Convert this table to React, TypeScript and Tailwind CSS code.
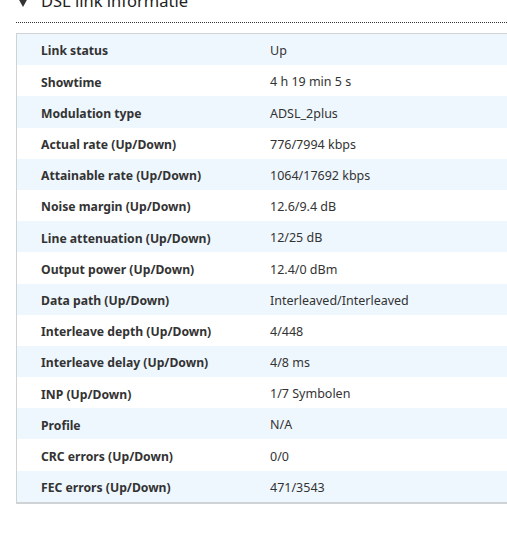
import React from "react";

const rows: [string, string][] = [
  ["Link status", "Up"],
  ["Showtime", "4 h 19 min 5 s"],
  ["Modulation type", "ADSL_2plus"],
  ["Actual rate (Up/Down)", "776/7994 kbps"],
  ["Attainable rate (Up/Down)", "1064/17692 kbps"],
  ["Noise margin (Up/Down)", "12.6/9.4 dB"],
  ["Line attenuation (Up/Down)", "12/25 dB"],
  ["Output power (Up/Down)", "12.4/0 dBm"],
  ["Data path (Up/Down)", "Interleaved/Interleaved"],
  ["Interleave depth (Up/Down)", "4/448"],
  ["Interleave delay (Up/Down)", "4/8 ms"],
  ["INP (Up/Down)", "1/7 Symbolen"],
  ["Profile", "N/A"],
  ["CRC errors (Up/Down)", "0/0"],
  ["FEC errors (Up/Down)", "471/3543"],
];

export default function App() {
  return (
    <div
      className="w-[507px] h-[539px] overflow-hidden bg-white pl-4 text-[#333]"
      style={{ fontFamily: '"Noto Sans", "Open Sans", sans-serif' }}
    >
      <div className="flex items-end h-[23px] border-b border-dotted border-[#333]">
        <div className="flex items-end mb-[13px]">
          <svg width="10" height="10" viewBox="0 0 10 10" className="ml-[2px] mr-[13px] mb-[1px]">
            <polygon points="0,0 10,0 5,9" fill="#333" />
          </svg>
          <span className="text-[16.5px] leading-[16px] text-[#222]">DSL link informatie</span>
        </div>
      </div>
      <div className="mt-[10px] border-t border-l border-b-2 border-[#cfd3d6]">
        {rows.map(([k, v], i) => (
          <div
            key={k}
            className={
              "flex items-center h-[31.2px] pt-[4px] " +
              (i % 2 === 0 ? "bg-[#eff7fe]" : "bg-white")
            }
          >
            <div className="w-[253px] pl-[24px] font-bold text-[12.2px] text-[#333]">{k}</div>
            <div className="text-[12.5px] text-[#333]">{v}</div>
          </div>
        ))}
      </div>
    </div>
  );
}
